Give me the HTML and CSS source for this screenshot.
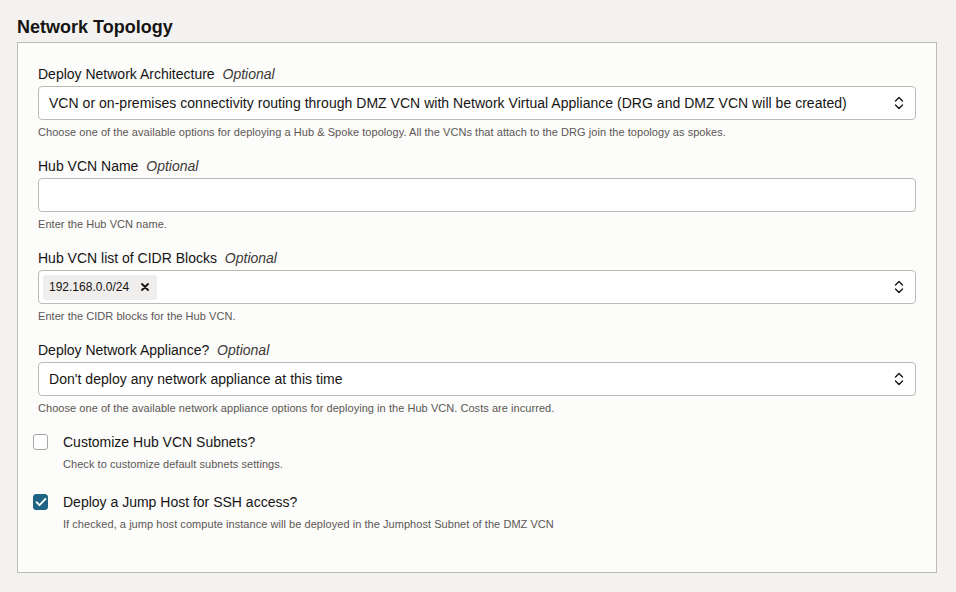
FILE: index.html
```html
<!DOCTYPE html>
<html lang="en">
<head>
<meta charset="utf-8">
<title>Network Topology</title>
<link rel="stylesheet" href="styles.css">
</head>
<body>
<div class="page">
  <h2 class="title">Network Topology</h2>
  <div class="panel">
    <div class="field">
      <div class="label">Deploy Network Architecture <em>Optional</em></div>
      <div class="control select">
        <span class="value">VCN or on-premises connectivity routing through DMZ VCN with Network Virtual Appliance (DRG and DMZ VCN will be created)</span>
        <svg class="chev" width="12" height="18" viewBox="0 0 12 18"><path d="M2.5 7 L6 3.5 L9.5 7 M2.5 11 L6 14.5 L9.5 11" fill="none" stroke="#161513" stroke-width="1.4" stroke-linecap="round" stroke-linejoin="round"/></svg>
      </div>
      <div class="help">Choose one of the available options for deploying a Hub &amp; Spoke topology. All the VCNs that attach to the DRG join the topology as spokes.</div>
    </div>
    <div class="field">
      <div class="label">Hub VCN Name <em>Optional</em></div>
      <div class="control"></div>
      <div class="help">Enter the Hub VCN name.</div>
    </div>
    <div class="field">
      <div class="label">Hub VCN list of CIDR Blocks <em>Optional</em></div>
      <div class="control select tags">
        <span class="chip"><span>192.168.0.0/24</span><svg class="x" width="8" height="8" viewBox="0 0 8 8"><path d="M1 1 L7 7 M7 1 L1 7" stroke="#161513" stroke-width="1.8" stroke-linecap="round"/></svg></span>
        <svg class="chev" width="12" height="18" viewBox="0 0 12 18"><path d="M2.5 7 L6 3.5 L9.5 7 M2.5 11 L6 14.5 L9.5 11" fill="none" stroke="#161513" stroke-width="1.4" stroke-linecap="round" stroke-linejoin="round"/></svg>
      </div>
      <div class="help">Enter the CIDR blocks for the Hub VCN.</div>
    </div>
    <div class="field">
      <div class="label">Deploy Network Appliance? <em>Optional</em></div>
      <div class="control select">
        <span class="value">Don't deploy any network appliance at this time</span>
        <svg class="chev" width="12" height="18" viewBox="0 0 12 18"><path d="M2.5 7 L6 3.5 L9.5 7 M2.5 11 L6 14.5 L9.5 11" fill="none" stroke="#161513" stroke-width="1.4" stroke-linecap="round" stroke-linejoin="round"/></svg>
      </div>
      <div class="help">Choose one of the available network appliance options for deploying in the Hub VCN. Costs are incurred.</div>
    </div>
    <div class="check first">
      <div class="check-row">
        <span class="box"></span>
        <span class="check-label">Customize Hub VCN Subnets?</span>
      </div>
      <div class="check-help">Check to customize default subnets settings.</div>
    </div>
    <div class="check">
      <div class="check-row">
        <span class="box checked"><svg width="12" height="10" viewBox="0 0 12 10"><path d="M1.5 5.2 L4.5 8.2 L10.5 1.8" fill="none" stroke="#fff" stroke-width="1.8" stroke-linecap="round" stroke-linejoin="round"/></svg></span>
        <span class="check-label">Deploy a Jump Host for SSH access?</span>
      </div>
      <div class="check-help">If checked, a jump host compute instance will be deployed in the Jumphost Subnet of the DMZ VCN</div>
    </div>
  </div>
</div>
</body>
</html>
```

FILE: styles.css
```css
* { box-sizing: border-box; }
html, body {
  margin: 0;
  padding: 0;
  background: #f3f2f1;
  font-family: "Liberation Sans", Arial, Helvetica, sans-serif;
  color: #161513;
}
.page {
  padding: 16px 20px 21px 17px;
}
.title {
  margin: 0 0 4px 0;
  font-size: 18px;
  line-height: 22px;
  font-weight: bold;
  color: #161513;
}
.panel {
  background: #fcfcfb;
  border: 1px solid #bdbbb8;
  padding: 21px 20px 40px 20px;
  width: 920px;
}
.field {
  margin-bottom: 16px;
}
.label {
  font-size: 14px;
  line-height: 20px;
  margin-bottom: 2px;
  color: #161513;
}
.label em {
  margin-left: 4px;
  color: #3d3a37;
}
.control {
  height: 34px;
  border: 1px solid #bdbbb8;
  border-radius: 4px;
  background: #fff;
  display: flex;
  align-items: center;
  padding: 0 10px;
}
.select .value {
  flex: 1;
  font-size: 14px;
  white-space: nowrap;
  overflow: hidden;
  letter-spacing: 0.03px;
}
.chev {
  margin-left: auto;
  flex: none;
}
.tags {
  padding-left: 4px;
}
.chip {
  display: inline-flex;
  align-items: center;
  flex: none;
  height: 25px;
  padding: 0 8px 0 6px;
  background: #f0eeec;
  border-radius: 3px;
  font-size: 12px;
  gap: 12px;
}
.chip .x {
  flex: none;
}
.help {
  margin-top: 4px;
  font-size: 11px;
  line-height: 16px;
  color: #5b5753;
  letter-spacing: 0.05px;
}
.check.first {
  margin-top: 15px;
}
.check + .check {
  margin-top: 20px;
}
.check-row {
  display: flex;
  align-items: center;
  height: 20px;
  margin-left: -5px;
}
.box {
  width: 15px;
  height: 16px;
  border: 1px solid #a8a5a2;
  border-radius: 3px;
  background: #fff;
  margin-right: 15px;
  display: inline-flex;
  align-items: center;
  justify-content: center;
}
.box.checked {
  background: #1f6483;
  border-color: #1f6483;
}
.check-label {
  font-size: 14px;
  line-height: 20px;
}
.check-help {
  margin-top: 4px;
  margin-left: 25px;
  font-size: 11px;
  line-height: 16px;
  color: #5b5753;
  letter-spacing: 0.05px;
}
```
